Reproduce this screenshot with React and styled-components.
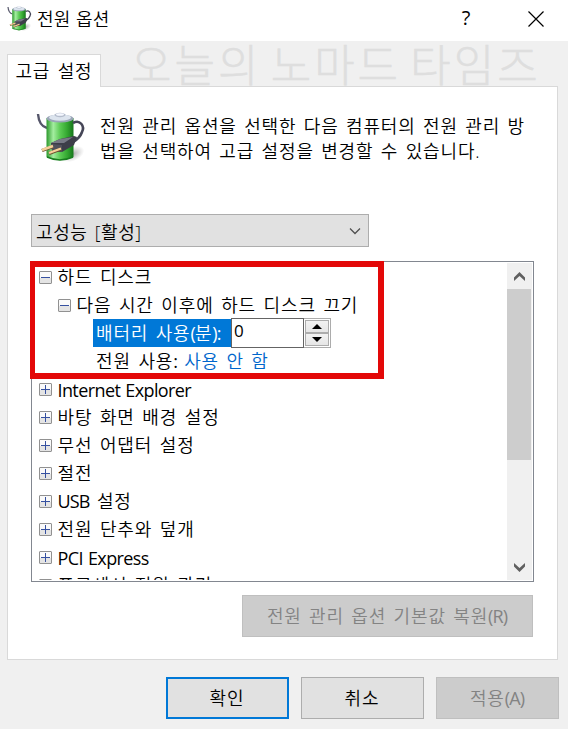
import React, { useState } from "react";
import styled, { createGlobalStyle } from "styled-components";

const GlobalStyle = createGlobalStyle`
  body {
    margin: 0;
    background: #f0f0f0;
  }
`;

const colors = {
  accent: "#0078d7",
  link: "#0066cc",
  panelBorder: "#d9d9d9",
  buttonBorder: "#adadad",
  button: "#e1e1e1",
  mark: "#e30808",
};

const Dialog = styled.div`
  display: flex;
  flex-direction: column;
  width: 568px;
  height: 729px;
  overflow: hidden;
  background: #f0f0f0;
  color: #000;
  font-family: "Open Sans", "Noto Sans CJK KR", sans-serif;
  font-size: 18px;
  font-weight: 350;
  letter-spacing: 0.85px;
  word-spacing: 1.9px;
  white-space: nowrap;
`;

const TitleBar = styled.header`
  display: flex;
  align-items: center;
  height: 41px;
  flex: none;
  padding-left: 7px;
  box-sizing: border-box;
  background: #fff;
`;

const TitleIcon = styled.div`
  display: flex;
  padding-bottom: 5px;
`;

const Title = styled.h1`
  flex: 1;
  margin: 0 0 0 5px;
  padding-bottom: 3px;
  font-size: 18px;
  font-weight: 350;
  line-height: 34px;
  letter-spacing: 0.3px;
  word-spacing: 0.2px;
`;

const HelpButton = styled.span`
  width: 28px;
  margin-right: 48px;
  padding-bottom: 5px;
  font-size: 20px;
  font-weight: 400;
  line-height: 34px;
  text-align: center;
  letter-spacing: 0;
`;

const CloseIcon = styled.svg`
  width: 16px;
  height: 16px;
  margin: 0 24px 4px 0;
`;

const TabBar = styled.div`
  display: flex;
  align-items: flex-end;
  height: 45px;
  flex: none;
  padding-left: 7px;
`;

const Tab = styled.div`
  width: 94px;
  height: 33px;
  margin-bottom: -1px;
  box-sizing: border-box;
  border: 1px solid ${colors.panelBorder};
  border-bottom: none;
  background: #fff;
  line-height: 32px;
  text-align: center;
  z-index: 1;
`;

const Watermark = styled.div`
  margin-left: 30px;
  height: 45px;
  color: #dedede;
  font-family: "Noto Sans CJK KR", sans-serif;
  font-size: 44px;
  font-weight: 300;
  line-height: 45px;
  letter-spacing: 3px;
  word-spacing: -3.5px;
  -webkit-text-stroke: 0.5px #dedede;
`;

const Panel = styled.main`
  display: flex;
  flex-direction: column;
  width: 551px;
  height: 574px;
  flex: none;
  margin-left: 7px;
  padding: 25px 24px 0 23px;
  box-sizing: border-box;
  border: 1px solid ${colors.panelBorder};
  background: #fff;
`;

const Intro = styled.div`
  display: flex;
  height: 102px;
  flex: none;
  padding-left: 5px;
`;

const IntroText = styled.p`
  margin: 2px 0 0 14px;
  line-height: 25px;
`;

const Combo = styled.div`
  display: flex;
  align-items: center;
  justify-content: space-between;
  width: 338px;
  height: 33px;
  flex: none;
  padding: 0 7px 0 4px;
  box-sizing: border-box;
  border: 1px solid ${colors.buttonBorder};
  background: ${colors.button};
  letter-spacing: 0.6px;
`;

const TreeBox = styled.section`
  position: relative;
  display: flex;
  width: 503px;
  height: 321px;
  flex: none;
  margin-top: 14px;
  box-sizing: border-box;
  border: 1px solid #828790;
`;

const TreeList = styled.div`
  flex: 1;
  height: 318px;
  padding-top: 2px;
  box-sizing: border-box;
  overflow: hidden;
`;

const Row = styled.div`
  display: flex;
  height: 28px;
  padding-left: ${({ $indent }) => $indent || 7}px;
  line-height: 27px;
`;

const Expander = styled.svg`
  width: 13px;
  height: 13px;
  flex: none;
  margin: 7px 5.5px 0 0;
`;

const Label = styled.span`
  font-weight: ${({ $latin }) => ($latin ? 400 : "inherit")};
  letter-spacing: ${({ $latin }) => ($latin ? "-0.6px" : "0.9px")};
  word-spacing: ${({ $latin }) => ($latin ? "1px" : "inherit")};
  line-height: ${({ $latin }) => ($latin ? "29px" : "inherit")};
`;

const Latin = styled.span`
  font-weight: 400;
  letter-spacing: -0.9px;
`;

const SelectedLabel = styled.span`
  width: 138px;
  height: 28px;
  padding-left: 3px;
  margin-top: -1px;
  box-sizing: border-box;
  background: ${colors.accent};
  color: #fff;
  line-height: 29px;
`;

const ValueLink = styled.span`
  margin-left: 7px;
  color: ${colors.link};
`;

const ValueField = styled.span`
  width: 73px;
  height: 30px;
  margin-top: -2px;
  padding-left: 2px;
  box-sizing: border-box;
  border: 1px solid #646464;
  background: #fff;
  font-size: 17px;
  font-weight: 400;
  line-height: 24px;
`;

const Spinner = styled.div`
  display: flex;
  flex-direction: column;
  width: 27px;
  height: 30px;
  margin-top: -2px;
  padding: 1px;
  box-sizing: border-box;
  border: 1px solid #acacac;
  border-left: none;
`;

const SpinButton = styled.button`
  display: flex;
  align-items: center;
  justify-content: center;
  flex: 1;
  padding: 0;
  border: 1px solid #acacac;
  background: linear-gradient(#f2f2f2, #e6e6e6);
`;

const Highlight = styled.div`
  position: absolute;
  left: -2px;
  top: -1px;
  width: 354px;
  height: 118px;
  box-sizing: border-box;
  border: 6px solid ${colors.mark};
  border-left-width: 5px;
  pointer-events: none;
`;

const ScrollBar = styled.div`
  display: flex;
  flex-direction: column;
  justify-content: space-between;
  width: 25px;
  height: 317px;
  margin: 1px 1px 0 0;
  background: #f0f0f0;
`;

const ScrollArrow = styled.svg`
  width: 25px;
  height: 26px;
  flex: none;
`;

const ScrollThumb = styled.div`
  width: 24px;
  height: 171px;
  margin-bottom: auto;
  background: #cdcdcd;
`;

const Button = styled.button`
  width: ${({ $wide }) => ($wide ? 291 : 123)}px;
  height: 42px;
  padding: 0 1px 2px 0;
  box-sizing: border-box;
  border: ${({ $primary }) =>
    $primary ? `2px solid ${colors.accent}` : `1px solid ${colors.buttonBorder}`};
  background: ${colors.button};
  color: #000;
  font: inherit;
  letter-spacing: inherit;
  word-spacing: inherit;

  &:disabled {
    border-color: #bfbfbf;
    background: #ccc;
    color: #838383;
  }
`;

const RestoreRow = styled.div`
  display: flex;
  justify-content: flex-end;
  margin-top: 13px;
`;

const Footer = styled.footer`
  display: flex;
  justify-content: flex-end;
  gap: 12px;
  padding: 17px 9px 0 0;
`;

function PowerIcon({ size }) {
  return (
    <svg width={size} height={size} viewBox="0 0 50 50">
      <defs>
        <linearGradient id="cell">
          <stop offset="0" stopColor="#2c9a2c" />
          <stop offset="0.25" stopColor="#a4eda0" />
          <stop offset="0.5" stopColor="#5ccb55" />
          <stop offset="0.75" stopColor="#36aa33" />
          <stop offset="1" stopColor="#16761b" />
        </linearGradient>
        <radialGradient id="shade">
          <stop offset="0" stopColor="#777" stopOpacity="0.6" />
          <stop offset="1" stopColor="#999" stopOpacity="0" />
        </radialGradient>
      </defs>
      <ellipse cx="37" cy="42" rx="12" ry="7" fill="url(#shade)" transform="rotate(-25 37 42)" />
      <path d="M2 2 Q3 14 11 16" fill="none" stroke="#55566a" strokeWidth="2.4" />
      <path d="M10.5 6v39q13 6.5 27 0V6z" fill="url(#cell)" />
      <path d="M11 45q13 6 26 0" fill="none" stroke="#197f20" strokeWidth="1.5" />
      <ellipse cx="24" cy="6.5" rx="13.5" ry="4" fill="#9ba7b8" />
      <ellipse cx="24" cy="5.5" rx="11" ry="3.2" fill="#dce4ee" />
      <ellipse cx="24" cy="3" rx="5.5" ry="2.2" fill="#b5bdcc" />
      <ellipse cx="24" cy="2.5" rx="4" ry="1.3" fill="#f5f8ff" />
      <path
        d="M37 11C44 7 49 14 46 20Q44 26 37 30"
        fill="none"
        stroke="#454657"
        strokeWidth="2.6"
      />
      <path d="M15 31l9-4 14-3 3 1-3 8-12 7-10-1z" fill="#3d3e49" />
      <path d="M15 31l9-4 13-2-9 6z" fill="#777985" />
      <path d="M15 32l11 1v7l-10-2z" fill="#50515c" />
      <path d="M6 38.5l11-4M13 41.5l12-4.5" fill="none" stroke="#6d5230" strokeWidth="3.4" />
      <path d="M6 38l11-4M13 41l12-4.5" fill="none" stroke="#f6d09a" strokeWidth="2.4" />
    </svg>
  );
}

function ExpandBox({ open }) {
  return (
    <Expander viewBox="0 0 13 13">
      <rect x="0.5" y="0.5" width="12" height="12" rx="0.5" fill="#fafafa" stroke="#919191" />
      <path d="M1 7h11v5H1z" fill="#e4e4e4" />
      <path d={open ? "M2 6.5h9" : "M2 6.5h9M6.5 2v9"} stroke="#3550a0" />
    </Expander>
  );
}

const settings = [
  { name: "Internet Explorer", latin: true },
  { name: "바탕 화면 배경 설정" },
  { name: "무선 어댑터 설정" },
  { name: "절전" },
  { prefix: "USB", name: " 설정" },
  { name: "전원 단추와 덮개" },
  { name: "PCI Express", latin: true },
  { name: "프로세서 전원 관리" },
];

function App() {
  const [minutes, setMinutes] = useState(0);

  return (
    <Dialog>
      <GlobalStyle />
      <TitleBar>
        <TitleIcon>
          <PowerIcon size={25} />
        </TitleIcon>
        <Title>전원 옵션</Title>
        <HelpButton>?</HelpButton>
        <CloseIcon viewBox="0 0 16 16">
          <path d="M0.5 0.5l15 15M15.5 0.5l-15 15" stroke="#000" strokeWidth="1.2" />
        </CloseIcon>
      </TitleBar>

      <TabBar>
        <Tab>고급 설정</Tab>
        <Watermark>오늘의 노마드 타임즈</Watermark>
      </TabBar>

      <Panel>
        <Intro>
          <PowerIcon size={50} />
          <IntroText>
            전원 관리 옵션을 선택한 다음 컴퓨터의 전원 관리 방
            <br />
            법을 선택하여 고급 설정을 변경할 수 있습니다.
          </IntroText>
        </Intro>

        <Combo>
          <span>고성능 [활성]</span>
          <svg width="12" height="8" viewBox="0 0 12 8">
            <path d="M1 1.5l5 5 5-5" fill="none" stroke="#505050" strokeWidth="1.3" />
          </svg>
        </Combo>

        <TreeBox>
          <TreeList>
            <Row>
              <ExpandBox open />
              <Label>하드 디스크</Label>
            </Row>
            <Row $indent={26}>
              <ExpandBox open />
              <Label>다음 시간 이후에 하드 디스크 끄기</Label>
            </Row>
            <Row $indent={61}>
              <SelectedLabel>
                배터리 사용<Latin>(</Latin>분<Latin>):</Latin>
              </SelectedLabel>
              <ValueField>{minutes}</ValueField>
              <Spinner>
                <SpinButton onClick={() => setMinutes(minutes + 1)}>
                  <svg width="10" height="5" viewBox="0 0 10 5">
                    <path d="M0 5l5-5 5 5z" />
                  </svg>
                </SpinButton>
                <SpinButton onClick={() => setMinutes(Math.max(0, minutes - 1))}>
                  <svg width="10" height="5" viewBox="0 0 10 5">
                    <path d="M0 0l5 5 5-5z" />
                  </svg>
                </SpinButton>
              </Spinner>
            </Row>
            <Row $indent={64}>
              <Label>
                전원 사용<Latin>:</Latin>
              </Label>
              <ValueLink>사용 안 함</ValueLink>
            </Row>
            {settings.map((item) => (
              <Row key={item.name}>
                <ExpandBox />
                <Label $latin={item.latin}>
                  {item.prefix && <Latin>{item.prefix}</Latin>}
                  {item.name}
                </Label>
              </Row>
            ))}
          </TreeList>
          <ScrollBar>
            <ScrollArrow viewBox="0 0 25 26">
              <path d="M7 18v-3.5l5.5-5.5 5.5 5.5V18l-5.5-5z" fill="#606060" />
            </ScrollArrow>
            <ScrollThumb />
            <ScrollArrow viewBox="0 0 25 26">
              <path d="M7 9v3.5l5.5 5.5 5.5-5.5V9l-5.5 5z" fill="#606060" />
            </ScrollArrow>
          </ScrollBar>
          <Highlight />
        </TreeBox>

        <RestoreRow>
          <Button $wide disabled>
            전원 관리 옵션 기본값 복원<Latin>(R)</Latin>
          </Button>
        </RestoreRow>
      </Panel>

      <Footer>
        <Button $primary>확인</Button>
        <Button>취소</Button>
        <Button disabled>
          적용<Latin>(A)</Latin>
        </Button>
      </Footer>
    </Dialog>
  );
}

export default App;
